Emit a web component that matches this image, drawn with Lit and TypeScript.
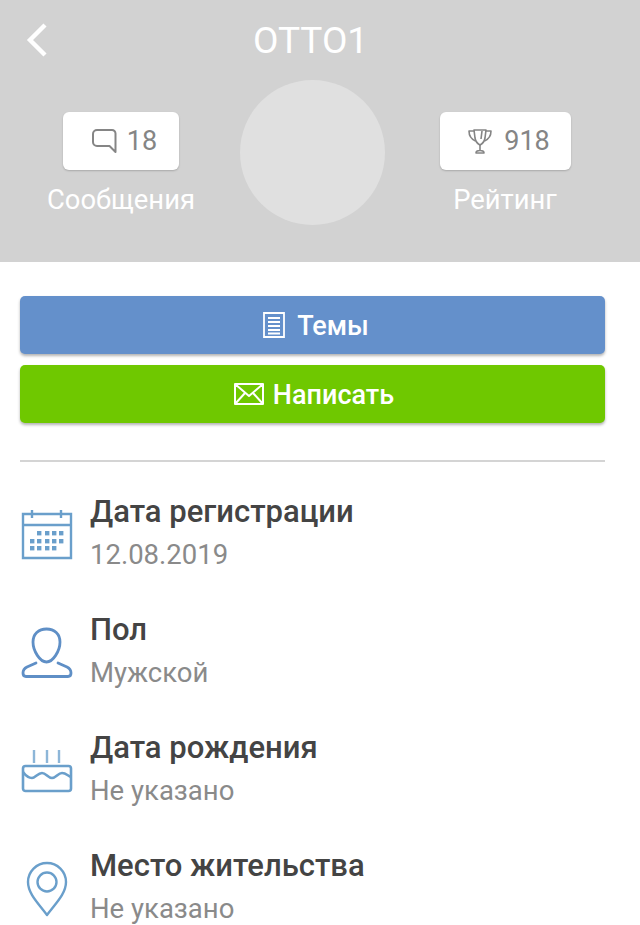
import { LitElement, html, css, svg } from 'lit';
import { customElement } from 'lit/decorators.js';

const calendarDots = [
  [19, 27], [27, 27], [34, 27], [41, 27],
  [12, 35], [19, 35], [27, 35], [34, 35], [41, 35],
  [12, 42], [19, 42], [27, 42], [34, 42],
];

// all row icons share one 54x60 box so they line up in the column
const icons = {
  calendar: html`<svg width="54" height="60" viewBox="0 0 54 60" fill="none" stroke="#6a9fcb" stroke-width="2.4">
    <path d="M3 8h48v44H3zM3 19h48M12 4v8M41 4v8" />
    ${calendarDots.map(([x, y]) => svg`<rect x=${x - 2} y=${y - 2} width="4.4" height="4.4" fill="#6a9fcb" stroke="none" />`)}
  </svg>`,
  person: html`<svg width="54" height="60" viewBox="0 0 54 60" fill="none" stroke="#5f8fc6" stroke-width="2.8" stroke-linejoin="round" stroke-linecap="round">
    <path d="M26.5 5c8 0 13.500 5 13.500 13 0 9-7 20-13.500 20S13 27 13 18c0-8 5.500-13 13.500-13z" />
    <path d="M16 39L7 43c-3 1.500-4 3-4 6 0 2.500 1 3.500 3 3.500h42c2 0 3-1 3-3.500 0-3-1-4.500-4-6l-9-4" />
  </svg>`,
  cake: html`<svg width="54" height="60" viewBox="0 0 54 60" fill="none" stroke="#6a9fcb" stroke-width="2.6" stroke-linejoin="round">
    <path d="M14 8v13M27 8v13M39 8v13" stroke="#8db6d8" stroke-width="2.4" />
    <rect x="3" y="24" width="48" height="25" rx="2.500" />
    <path d="M3 30C6 34 9 36 12 36s6-5 10-5 6 5 10 5 6-5 10-5 6 3 9 4" />
  </svg>`,
  pin: html`<svg width="54" height="60" viewBox="0 0 54 60" fill="none" stroke="#6a9fcb" stroke-width="2.4" stroke-linejoin="round">
    <path d="M27 55C19 44 8 34 8 22a19 19 0 0 1 38 0c0 12-11 22-19 33z" />
    <circle cx="27" cy="22" r="9.500" />
  </svg>`,
};

const rows = [
  { icon: icons.calendar, title: 'Дата регистрации', value: '12.08.2019' },
  { icon: icons.person, title: 'Пол', value: 'Мужской' },
  { icon: icons.cake, title: 'Дата рождения', value: 'Не указано' },
  { icon: icons.pin, title: 'Место жительства', value: 'Не указано' },
];

@customElement('app-root')
export class AppRoot extends LitElement {
  static styles = css`
    :host {
      display: block;
      height: 925px;
      overflow: hidden;
      background: #fff;
      font-family: Roboto, "Noto Sans", sans-serif;
    }

    .header {
      height: 262px;
      background: #d2d2d2;
      box-sizing: border-box;
      color: #fff;
    }

    .top {
      display: grid;
      grid-template-columns: 253px auto;
      height: 80px;
      align-items: center;
    }

    .back {
      display: block;
      margin: -1px 0 0 25px;
    }

    .name {
      font-size: 37px;
      line-height: 42px;
      margin-top: 2px;
    }

    .stats {
      display: grid;
      grid-template-columns: 240px 145px 240px;
    }

    .stat {
      display: flex;
      flex-direction: column;
      align-items: center;
      padding-top: 32px;
    }

    .stat.left {
      padding-left: 2px;
    }

    .badge {
      display: flex;
      align-items: center;
      justify-content: center;
      height: 58px;
      box-sizing: border-box;
      background: #fff;
      border-radius: 6px;
      box-shadow: 0 1px 2px rgba(0, 0, 0, 0.2);
      color: #858585;
      font-size: 27px;
    }

    .badge.messages {
      width: 116px;
      gap: 10px;
      padding-left: 6px;
    }

    .badge.rating {
      width: 131px;
      gap: 12px;
      padding-left: 8px;
    }

    .label {
      font-size: 27.4px;
      line-height: 30px;
      margin-top: 15px;
    }

    .avatar {
      width: 145px;
      height: 145px;
      border-radius: 50%;
      background: #e0e0e0;
    }

    .content {
      padding: 34px 35px 0 20px;
    }

    .btn {
      display: flex;
      align-items: center;
      justify-content: center;
      height: 58px;
      box-sizing: border-box;
      border-radius: 5px;
      color: #fff;
      font-size: 27px;
      font-weight: 500;
      box-shadow: 0 2px 3px rgba(0, 0, 0, 0.3);
    }

    .btn span {
      margin-top: 2px;
    }

    .btn.blue {
      background: #6490cb;
      gap: 12px;
      margin-bottom: 11px;
      padding-left: 7px;
    }

    .btn.green {
      background: #6fc800;
      gap: 9px;
      padding-left: 3px;
    }

    .divider {
      height: 2px;
      background: #d4d4d4;
      margin: 37px 0 28px;
    }

    .row {
      display: grid;
      grid-template-columns: 70px 1fr;
      height: 118px;
      align-items: start;
    }

    .row-icon {
      height: 60px;
      margin-top: 16px;
    }

    .row-title {
      font-size: 31px;
      font-weight: 500;
      line-height: 44px;
      color: #444;
    }

    .row-value {
      font-size: 27.5px;
      line-height: 42px;
      color: #8a8a8a;
    }
  `;

  render() {
    return html`
      <div class="header">
        <div class="top">
          <svg class="back" width="24" height="34" viewBox="0 0 24 34" fill="none" stroke="#fff" stroke-width="4.4">
            <path d="M20 2L5 17l15 15" />
          </svg>
          <div class="name">OTTO1</div>
        </div>
        <div class="stats">
          <div class="stat left">
            <div class="badge messages">
              <svg width="26" height="26" viewBox="0 0 26 26" fill="none" stroke="#858585" stroke-width="2" stroke-linejoin="round">
                <path d="M6 2h15a3.500 3.500 0 0 1 3.500 3.500V24l-6-6H6a4 4 0 0 1-4-4V6a4 4 0 0 1 4-4z" />
              </svg>
              <span>18</span>
            </div>
            <div class="label">Сообщения</div>
          </div>
          <div class="avatar"></div>
          <div class="stat">
            <div class="badge rating">
              <svg width="24" height="26" viewBox="0 0 24 26" fill="none" stroke="#858585" stroke-width="1.600" stroke-linejoin="round">
                <path d="M6 2h12l-1 8c-.5 3-3 6-5 7-2-1-4.500-4-5-7z" />
                <path d="M6 3H1c0 5 2 8 6.500 10M18 3h5c0 5-2 8-6.500 10M12 17v6M8 25c0-2 2-2.500 4-2.500s4 .5 4 2.500zM14 3l-1 8" />
              </svg>
              <span>918</span>
            </div>
            <div class="label">Рейтинг</div>
          </div>
        </div>
      </div>
      <div class="content">
        <div class="btn blue">
          <svg width="22" height="26" viewBox="0 0 22 26" fill="none" stroke="#fff" stroke-width="1.800">
            <path d="M1 1h20v24H1zM5 6h12M5 10h12M5 14h12M5 18h12M5 21.500h12" />
          </svg>
          <span>Темы</span>
        </div>
        <div class="btn green">
          <svg width="30" height="22" viewBox="0 0 30 22" fill="none" stroke="#fff" stroke-width="2" stroke-linejoin="round">
            <path d="M1 1h28v20H1zM1 1l14 12L29 1M1 21l10-11M29 21L19 10" />
          </svg>
          <span>Написать</span>
        </div>
        <div class="divider"></div>
        ${rows.map(
          (r) => html`
            <div class="row">
              <div class="row-icon">${r.icon}</div>
              <div>
                <div class="row-title">${r.title}</div>
                <div class="row-value">${r.value}</div>
              </div>
            </div>
          `
        )}
      </div>
    `;
  }
}
